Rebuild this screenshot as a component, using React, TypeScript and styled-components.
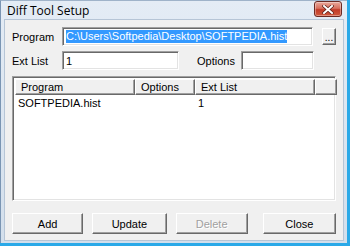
import * as React from 'react';
import styled, { createGlobalStyle } from 'styled-components';

const GlobalStyle = createGlobalStyle`
    html, body {
        margin: 0;
        padding: 0;
        background: #2aa9e8;
    }
    body {
        font-family: Tahoma, "Liberation Sans", Arial, sans-serif;
        font-size: 11px;
        color: #000;
    }
`;

const Window = styled.div`
    width: 347px;
    height: 243px;
    box-sizing: border-box;
    background: linear-gradient(#e4ecf5, #d3dfec);
    border-left: 1px solid #7a95b3;
    border-top: 1px solid #9fb3c9;
    padding: 0 3px 3px 3px;
    display: flex;
    flex-direction: column;
`;

const TitleBar = styled.div`
    height: 22px;
    display: flex;
    align-items: center;
    justify-content: space-between;
    padding: 0 2px 0 3px;
`;

const Title = styled.div`
    font-family: "Open Sans", "Liberation Sans", sans-serif;
    font-size: 12px;
    color: #000;
    padding-top: 1px;
`;

const CloseButton = styled.div`
    width: 28px;
    height: 16px;
    box-sizing: border-box;
    margin-top: -2px;
    border: 1px solid #6b2a24;
    border-radius: 3px;
    background: linear-gradient(#e9a99c 0%, #d8705e 45%, #c23b28 55%, #d05a3e 100%);
    display: flex;
    align-items: center;
    justify-content: center;
    box-shadow: inset 0 0 0 1px rgba(255, 255, 255, 0.35);
`;

const Client = styled.div`
    flex: 1;
    background: #f0f0f0;
    border: 1px solid #b6c5d6;
    padding: 7px 7px 6px 7px;
    display: flex;
    flex-direction: column;
`;

const FieldRow = styled.div<{ $mt?: number }>`
    display: flex;
    align-items: center;
    height: 19px;
    margin-top: ${p => p.$mt ?? 0}px;
`;

const Label = styled.div<{ $w: number; $ml?: number }>`
    width: ${p => p.$w}px;
    margin-left: ${p => p.$ml ?? 0}px;
    flex: none;
`;

const Field = styled.div<{ $w: number }>`
    width: ${p => p.$w}px;
    height: 19px;
    box-sizing: border-box;
    background: #fff;
    border-top: 1px solid #a0a0a0;
    border-left: 1px solid #a0a0a0;
    border-right: 1px solid #fff;
    border-bottom: 1px solid #fff;
    box-shadow: inset 1px 1px 0 #696969, inset -1px -1px 0 #e3e3e3;
    padding: 0 3px;
    display: flex;
    align-items: center;
    white-space: nowrap;
    overflow: hidden;
    flex: none;
`;

const Selected = styled.span`
    background: #3399ff;
    color: #fff;
    line-height: 13px;
`;

const SmallButton = styled.div`
    width: 16px;
    height: 17px;
    box-sizing: border-box;
    margin-left: 9px;
    background: #f0f0f0;
    border-top: 1px solid #fff;
    border-left: 1px solid #fff;
    border-right: 1px solid #696969;
    border-bottom: 1px solid #696969;
    box-shadow: inset -1px -1px 0 #a0a0a0;
    display: flex;
    align-items: flex-end;
    justify-content: center;
    line-height: 12px;
    font-size: 10px;
`;

const List = styled.div`
    margin-top: 6px;
    height: 125px;
    box-sizing: border-box;
    background: #fff;
    border-top: 1px solid #a0a0a0;
    border-left: 1px solid #a0a0a0;
    border-right: 1px solid #fff;
    border-bottom: 1px solid #fff;
    box-shadow: inset 1px 1px 0 #696969, inset -1px -1px 0 #e3e3e3;
    padding: 2px 2px 0 2px;
    display: flex;
    flex-direction: column;
`;

const Header = styled.div`
    display: flex;
    height: 16px;
`;

const HeaderCell = styled.div<{ $w: number }>`
    width: ${p => p.$w}px;
    flex: none;
    box-sizing: border-box;
    background: #f0f0f0;
    border-top: 1px solid #fff;
    border-left: 1px solid #fff;
    border-right: 1px solid #696969;
    border-bottom: 1px solid #696969;
    box-shadow: inset -1px -1px 0 #a0a0a0;
    padding-left: 5px;
    display: flex;
    align-items: center;
    line-height: 12px;
`;

const DataRow = styled.div`
    display: flex;
    height: 15px;
    align-items: center;
`;

const DataCell = styled.div<{ $w: number }>`
    width: ${p => p.$w}px;
    flex: none;
    box-sizing: border-box;
    padding-left: 3px;
`;

const ButtonBar = styled.div`
    margin-top: 12px;
    display: flex;
    gap: 9px;
`;

const PushButton = styled.div<{ $w: number; $disabled?: boolean; $ml?: number }>`
    width: ${p => p.$w}px;
    height: 21px;
    margin-left: ${p => p.$ml ?? 0}px;
    box-sizing: border-box;
    background: #f0f0f0;
    border-top: 1px solid #fff;
    border-left: 1px solid #fff;
    border-right: 1px solid #696969;
    border-bottom: 1px solid #696969;
    box-shadow: inset -1px -1px 0 #a0a0a0;
    display: flex;
    align-items: center;
    justify-content: center;
    color: ${p => (p.$disabled ? '#a0a0a0' : '#000')};
    text-shadow: ${p => (p.$disabled ? '1px 1px 0 #fff' : 'none')};
`;

const CloseGlyph = () => (
    <svg width="12" height="9" viewBox="0 0 12 9">
        <path d="M2 1 L10 8 M10 1 L2 8" stroke="#5a1d16" strokeWidth="3.4" strokeLinecap="square" />
        <path d="M2 1 L10 8 M10 1 L2 8" stroke="#fff" strokeWidth="2" strokeLinecap="square" />
    </svg>
);

export default function App() {
    return (
        <>
            <GlobalStyle />
            <Window>
                <TitleBar>
                    <Title>Diff Tool Setup</Title>
                    <CloseButton>
                        <CloseGlyph />
                    </CloseButton>
                </TitleBar>
                <Client>
                    <FieldRow>
                        <Label $w={50}>Program</Label>
                        <Field $w={251}>
                            <Selected>C:\Users\Softpedia\Desktop\SOFTPEDIA.hist</Selected>
                        </Field>
                        <SmallButton>...</SmallButton>
                    </FieldRow>
                    <FieldRow $mt={5}>
                        <Label $w={50}>Ext List</Label>
                        <Field $w={117}>1</Field>
                        <Label $w={44} $ml={18}>Options</Label>
                        <Field $w={73}></Field>
                    </FieldRow>
                    <List>
                        <Header>
                            <HeaderCell $w={120}>Program</HeaderCell>
                            <HeaderCell $w={60}>Options</HeaderCell>
                            <HeaderCell $w={120}>Ext List</HeaderCell>
                            <HeaderCell $w={22}></HeaderCell>
                        </Header>
                        <DataRow>
                            <DataCell $w={120}>SOFTPEDIA.hist</DataCell>
                            <DataCell $w={60}></DataCell>
                            <DataCell $w={120}>1</DataCell>
                        </DataRow>
                    </List>
                    <ButtonBar>
                        <PushButton $w={72}>Add</PushButton>
                        <PushButton $w={75}>Update</PushButton>
                        <PushButton $w={73} $disabled>Delete</PushButton>
                        <PushButton $w={74} $ml={6}>Close</PushButton>
                    </ButtonBar>
                </Client>
            </Window>
        </>
    );
}
